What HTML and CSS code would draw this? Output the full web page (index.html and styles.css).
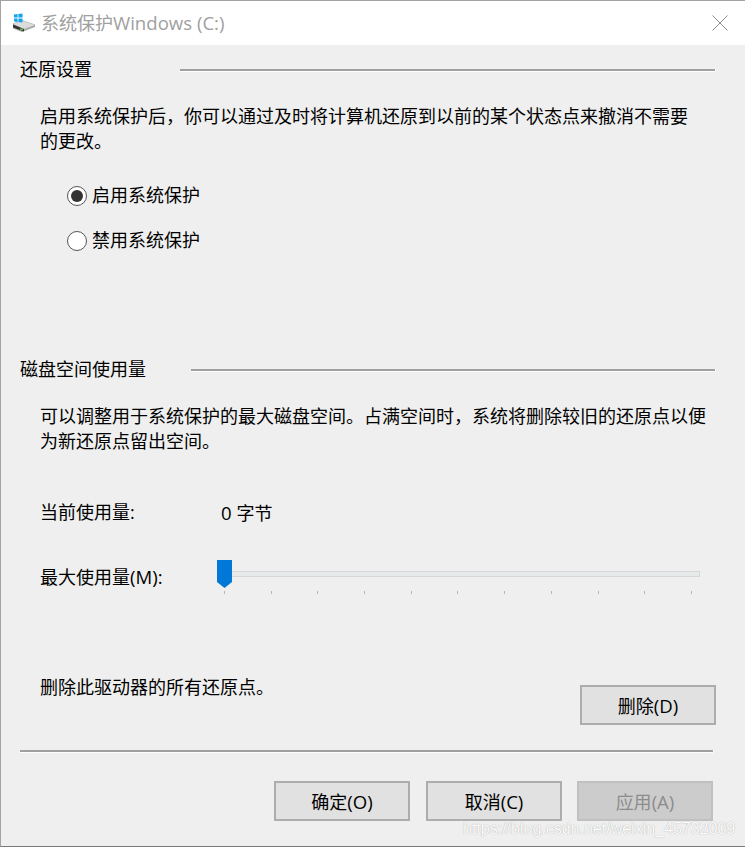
FILE: index.html
```html
<!DOCTYPE html>
<html lang="zh-CN">
  <head>
    <meta charset="UTF-8" />
    <title>系统保护Windows (C:)</title>
    <link rel="stylesheet" href="styles.css">
  </head>
  <body>
    <div class="window">
      <div class="title-bar">
        <svg class="drive-icon" width="24" height="20" viewBox="0 0 24 20">
          <path d="M1 10.5 L10 7 L23 11.5 L23 14 L10 19 L1 15.5 Z" fill="#a9a9a9" />
          <path d="M1 11 L10 7.5 L23 12 L12 16 Z" fill="#dcdcdc" />
          <path d="M1 11.5 L12 16 L12 18.5 L1 14.5 Z" fill="#333" />
          <rect x="8" y="15.5" width="3" height="1.5" fill="#5fbf4a" />
          <path d="M2 1.6 L5.6 1.1 L5.6 4.6 L2 4.6 Z M6.4 1 L10.5 0.4 L10.5 4.6 L6.4 4.6 Z M2 5.4 L5.6 5.4 L5.6 8.9 L2 8.4 Z M6.4 5.4 L10.5 5.4 L10.5 9.6 L6.4 9 Z" fill="#12a5ea" />
        </svg>
        <span class="title-text">系统保护<span class="en">Windows (C:)</span></span>
        <svg class="close-icon" width="16" height="16" viewBox="0 0 16 16">
          <path d="M0.5 0.5 L15.5 15.5 M15.5 0.5 L0.5 15.5" stroke="#8c8c8c" stroke-width="1" fill="none" />
        </svg>
      </div>

      <div class="content">
        <div class="group-head first">
          <span>还原设置</span>
          <div class="rule"></div>
        </div>
        <p class="desc narrow">启用系统保护后，你可以通过及时将计算机还原到以前的某个状态点来撤消不需要的更改。</p>

        <div class="radios">
          <div class="radio-row">
            <span class="radio checked"></span>
            <span>启用系统保护</span>
          </div>
          <div class="radio-row">
            <span class="radio"></span>
            <span>禁用系统保护</span>
          </div>
        </div>

        <div class="group-head second">
          <span>磁盘空间使用量</span>
          <div class="rule"></div>
        </div>
        <p class="desc">可以调整用于系统保护的最大磁盘空间。占满空间时，系统将删除较旧的还原点以便为新还原点留出空间。</p>

        <div class="usage-row">
          <span class="usage-label">当前使用量:</span>
          <span><span class="en">0 </span>字节</span>
        </div>

        <div class="slider-row">
          <span class="usage-label">最大使用量<span class="en">(M):</span></span>
          <div class="slider">
            <div class="track"></div>
            <svg class="thumb" width="15" height="28" viewBox="0 0 15 28">
              <path d="M0 0 H15 V22 L7.5 28 L0 22 Z" fill="#0078d7" />
            </svg>
            <div class="ticks">
              <i></i><i></i><i></i><i></i><i></i><i></i><i></i><i></i><i></i><i></i><i></i>
            </div>
          </div>
        </div>

        <div class="delete-row">
          <span>删除此驱动器的所有还原点。</span>
          <button class="btn">删除<span class="en">(D)</span></button>
        </div>

        <div class="rule bottom-rule"></div>

        <div class="actions">
          <button class="btn">确定<span class="en">(O)</span></button>
          <button class="btn">取消<span class="en">(C)</span></button>
          <button class="btn disabled">应用<span class="en">(A)</span></button>
        </div>
      </div>
      <div class="watermark">https://blog.csdn.net/weixin_45732009</div>
    </div>
  </body>
</html>
```

FILE: styles.css
```css
* {
  margin: 0;
  padding: 0;
  box-sizing: border-box;
  font-family: "Open Sans", "Noto Sans CJK SC", sans-serif;
}

body {
  background: #efefef;
}

.window {
  position: relative;
  width: 745px;
  height: 847px;
  background: #efefef;
  border: 1px solid #a3a3a3;
  border-right: none;
  border-bottom-color: #7a7a7a;
  font-size: 18px;
  line-height: 25px;
  color: #000;
}

.en {
  font-size: 18.6px;
}

.title-bar {
  display: flex;
  align-items: center;
  height: 44px;
  padding: 0 17px 0 11px;
  background: #fff;
}

.drive-icon {
  flex: none;
}

.title-text {
  flex: 1;
  margin-left: 5px;
  color: #a0a0a0;
}

.content {
  padding-left: 19px;
}

.group-head {
  display: flex;
  align-items: center;
  padding-right: 30px;
}

.group-head.first {
  margin-top: 12px;
}

.group-head.second {
  margin-top: 104px;
}

.group-head .rule {
  flex: 1;
  margin-left: 88px;
}

.group-head.second .rule {
  margin-left: 45px;
}

.rule {
  height: 2px;
  background: #a0a0a0;
  box-shadow: 0 1px 0 #fff, 1px 0 0 #fff;
}

.desc {
  width: 672px;
  margin: 22px 0 0 20px;
}

.desc.narrow {
  width: 650px;
}

.radios {
  margin: 29px 0 0 47px;
}

.radio-row {
  display: flex;
  align-items: center;
  gap: 5px;
  height: 25px;
  margin-bottom: 20px;
}

.radio {
  width: 20px;
  height: 20px;
  border: 1px solid #555;
  border-radius: 50%;
  background: #fff;
  display: flex;
  align-items: center;
  justify-content: center;
}

.radio.checked::before {
  content: "";
  width: 12px;
  height: 12px;
  border-radius: 50%;
  background: #333;
}

.usage-row {
  display: flex;
  margin: 46px 0 0 20px;
}

.usage-label {
  width: 181px;
  flex: none;
}

.slider-row {
  display: flex;
  margin: 38px 0 0 20px;
}

.slider {
  position: relative;
  width: 484px;
  height: 36px;
  margin-top: -4px;
}

.track {
  position: absolute;
  left: 0;
  right: 5px;
  top: 11px;
  height: 6px;
  background: #e7eaea;
  border: 1px solid #d6d6d6;
}

.thumb {
  position: absolute;
  left: -4px;
  top: 0;
}

.ticks {
  position: absolute;
  left: 3px;
  top: 31px;
  width: 468px;
  display: flex;
  justify-content: space-between;
}

.ticks i {
  width: 1px;
  height: 3px;
  background: #b8b8b8;
}

.delete-row {
  display: flex;
  justify-content: space-between;
  padding: 0 29px 0 20px;
  margin-top: 79px;
}

.btn {
  width: 136px;
  height: 40px;
  font-size: 18px;
  color: #000;
  background: #e1e1e1;
  border: 2px solid #adadad;
}

.delete-row .btn {
  margin-top: 10px;
}

.bottom-rule {
  width: 693px;
  margin-top: 25px;
}

.actions {
  display: flex;
  justify-content: flex-end;
  gap: 16px;
  padding-right: 32px;
  margin-top: 29px;
}

.btn.disabled {
  margin-left: -1px;
  color: #8c8c8c;
  background: #cccccc;
  border-color: #c0c0c0;
}

.watermark {
  position: absolute;
  left: 462px;
  top: 815px;
  font-family: "Liberation Sans", sans-serif;
  font-size: 16px;
  color: #fff;
  opacity: 0.8;
  text-shadow: 0 0 1px #888;
}
```
